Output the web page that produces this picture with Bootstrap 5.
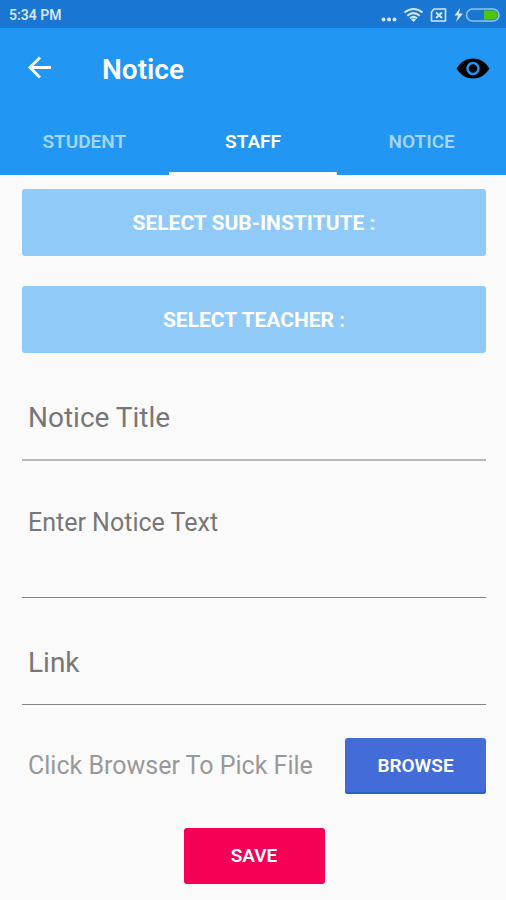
<!DOCTYPE html>
<html lang="en">
<head>
<meta charset="utf-8">
<meta name="viewport" content="width=device-width, initial-scale=1">
<title>Notice</title>
<link href="https://cdn.jsdelivr.net/npm/bootstrap@5.3.0/dist/css/bootstrap.min.css" rel="stylesheet">
<style>
body { font-family: Roboto, "Liberation Sans", sans-serif; background: #fafafa; }
.status-bar { background: #1976d2; color: #d3e6fb; height: 28px; padding: 2px 6px 0 9px; font-size: 14px; font-weight: 600; }
.app-header { background: #2196f3; }
.title-bar { height: 82px; padding: 0 16px 0 24px; }
.title-bar h1 { font-size: 28px; font-weight: 600; line-height: 36px; padding-top: 2px; margin-left: 48px; }
.icon-button { background: none; border: 0; line-height: 0; }
.tab-strip .nav-link { height: 65px; padding: 0; border-radius: 0; border-bottom: 3px solid transparent; color: #a6d5fa; font-size: 19px; font-weight: 600; line-height: 64px; }
.tab-strip .nav-link.active { color: #fff; border-bottom-color: #fff; }
.notice-form { padding: 14px 20px 16px 22px; }
.notice-form .btn { border: 0; border-radius: 3px; color: #fff; font-size: 19px; font-weight: 600; }
.btn-select { --bs-btn-bg: #90caf9; --bs-btn-hover-bg: #7fc0f6; height: 67px; margin-bottom: 30px; }
.notice-form .btn-select { font-size: 21px; font-weight: 700; padding-top: 8px; }
.line-field, .line-field:focus { border: 0; border-radius: 0; border-bottom: 1px solid #858585; background: transparent; box-shadow: none; color: #333; font-size: 28px; padding: 0 6px 8px; resize: none; }
.line-field::placeholder { color: #777; opacity: 1; }
.title-field { height: 78px; border-bottom: 2px solid #b8b8b8 !important; }
.notice-form .text-field { height: 92px; margin-top: 45px; font-size: 25px; line-height: 34px; }
.link-field { height: 76px; margin-top: 31px; }
.pick-row { margin-top: 33px; padding-left: 6px; }
.pick-row label { color: #999; font-size: 25px; }
.btn-action { width: 141px; height: 56px; }
.btn-browse { --bs-btn-bg: #436cd8; --bs-btn-hover-bg: #385fc8; box-shadow: inset 0 -2px #2463c8; }
.btn-save { --bs-btn-bg: #f50057; --bs-btn-hover-bg: #dc004e; margin-top: 34px; }
</style>
<script src="https://cdn.jsdelivr.net/npm/bootstrap@5.3.0/dist/js/bootstrap.bundle.min.js"></script>
</head>
<body>
<div class="status-bar d-flex align-items-center justify-content-between">
  <span>5:34 PM</span>
  <div class="d-flex align-items-center">
    <svg width="120" height="20" viewBox="0 0 120 20" fill="none" aria-hidden="true">
      <g fill="#d3e6fb"><circle cx="3.500" cy="14.500" r="2"/><circle cx="9" cy="14.500" r="2"/><circle cx="14.500" cy="14.500" r="2"/></g>
      <g stroke="#d3e6fb" stroke-width="2"><path d="M24.500 7.500Q33.500 .500 42.500 7.500M27.300 10.700Q33.500 5.500 39.700 10.700M30 13.300Q33.500 10.500 37 13.300"/></g>
      <path d="M31 14.500L33.500 17L36 14.500Q33.500 12.500 31 14.500" fill="#d3e6fb"/>
      <path d="M54 4H65.500V16H51.500V7Z" stroke="#d3e6fb" stroke-width="1.600" stroke-linejoin="round"/>
      <path d="M56 7.500L62 13M62 7.500L56 13" stroke="#d3e6fb" stroke-width="2"/>
      <path d="M80 3L74.500 10.500H78L76 17L83 8.500H79Z" fill="#d3e6fb"/>
      <rect x="86.500" y="4" width="32.500" height="12" rx="6" stroke="#8fc2f7" stroke-width="1.600"/>
      <path d="M104 5.500H113A4.500 4.500 0 0 1 113 14.500H104Z" fill="#4ec60b"/>
    </svg>
  </div>
</div>
<header class="app-header">
  <div class="title-bar d-flex align-items-center">
    <button class="icon-button p-0" type="button" aria-label="Back">
      <svg width="30" height="30" viewBox="0 0 30 30" fill="none" stroke="#fff" stroke-width="2.800"><path d="M27 13.500H6M16 3.500L6 13.500L16 23.500"/></svg>
    </button>
    <h1 class="mb-0 text-white">Notice</h1>
    <button class="icon-button p-0 ms-auto" type="button" aria-label="View notices">
      <svg width="34" height="24" viewBox="0 0 34 24"><path d="M.5 11.500C5 4.500 10.500 1.500 17 1.500S29 4.500 33.500 11.500C29 18.500 23.500 21.500 17 21.500S5 18.500.5 11.500Z" fill="#000"/><circle cx="17" cy="11.500" r="5.500" fill="#000" stroke="#2196f3" stroke-width="2.500"/></svg>
    </button>
  </div>
  <nav class="nav nav-justified tab-strip">
    <a class="nav-link" href="#student">STUDENT</a>
    <a class="nav-link active" href="#staff" aria-current="page">STAFF</a>
    <a class="nav-link" href="#notice">NOTICE</a>
  </nav>
</header>
<main>
  <form class="notice-form d-flex flex-column">
    <button class="btn btn-select w-100" type="button">SELECT SUB-INSTITUTE :</button>
    <button class="btn btn-select w-100" type="button">SELECT TEACHER :</button>
    <input class="form-control line-field title-field" type="text" placeholder="Notice Title" aria-label="Notice Title">
    <textarea class="form-control line-field text-field" placeholder="Enter Notice Text" aria-label="Enter Notice Text"></textarea>
    <input class="form-control line-field link-field" type="text" placeholder="Link" aria-label="Link">
    <div class="pick-row d-flex align-items-center justify-content-between">
      <label for="browse">Click Browser To Pick File</label>
      <button class="btn btn-action btn-browse" id="browse" type="button">BROWSE</button>
    </div>
    <button class="btn btn-action btn-save align-self-center" type="submit">SAVE</button>
  </form>
</main>
</body>
</html>
